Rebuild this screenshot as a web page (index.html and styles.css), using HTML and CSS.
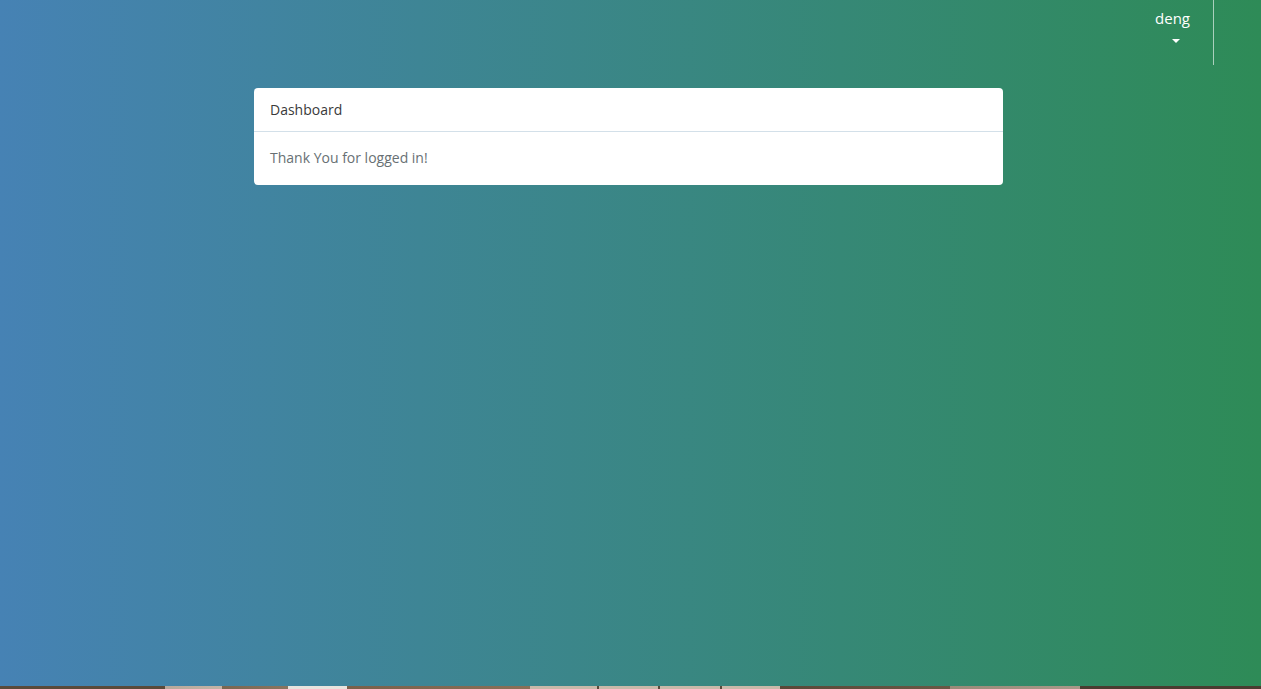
FILE: index.html
```html
<!DOCTYPE html>
<html>
<head>
<meta charset="utf-8">
<link rel="stylesheet" href="styles.css">
<title>Dashboard</title>
</head>
<body>
<div class="page">
  <nav class="navbar">
    <div class="nav-item">
      <span class="user">deng</span>
      <span class="caret"></span>
    </div>
    <div class="divider"></div>
  </nav>
  <main class="content">
    <div class="panel">
      <div class="panel-heading">Dashboard</div>
      <div class="panel-body">Thank You for logged in!</div>
    </div>
  </main>
  <div class="strip"></div>
</div>
</body>
</html>
```
FILE: styles.css
```css
html, body {
  margin: 0;
  padding: 0;
  height: 100%;
}
body {
  font-family: "Open Sans", "Lato", sans-serif;
  font-size: 14px;
  line-height: 1.6;
}
.page {
  height: 689px;
  display: flex;
  flex-direction: column;
  background: linear-gradient(to right, #4682b4, #2e8b57);
  overflow: hidden;
}
.navbar {
  height: 65px;
  display: flex;
  justify-content: flex-end;
  padding-right: 47px;
  flex-shrink: 0;
}
.nav-item {
  display: flex;
  flex-direction: column;
  align-items: center;
  padding: 6px 23px 0 0;
  color: #fff;
}
.user {
  font-size: 15px;
  line-height: 24px;
}
.caret {
  margin-top: 9px;
  width: 0;
  height: 0;
  border-left: 4px solid transparent;
  border-right: 4px solid transparent;
  border-top: 4px solid #fff;
  margin-left: 6px;
}
.divider {
  width: 1px;
  height: 65px;
  background: rgba(255, 255, 255, 0.6);
}
.content {
  flex: 1;
  display: flex;
  justify-content: center;
  align-items: flex-start;
  padding-top: 23px;
}
.panel {
  width: 749px;
  background: #fff;
  border-radius: 4px;
  margin-left: -4px;
}
.panel-heading {
  padding: 11px 15px 10px 16px;
  color: #3a3a3a;
  border-bottom: 1px solid #d3e0e9;
}
.panel-body {
  padding: 15px 15px 15px 16px;
  color: #687074;
}
.strip {
  height: 3px;
  flex-shrink: 0;
  background: linear-gradient(to right,
    #5a4a3a 0, #5a4a3a 165px,
    #b8a89a 165px, #c4b4a6 222px,
    #7a6650 222px, #8a7560 288px,
    #e8e4de 288px, #e8e4de 347px,
    #7a604a 347px, #8a7058 530px,
    #c9b9a9 530px, #c9b9a9 597px,
    #5a4a3a 597px, #5a4a3a 599px,
    #c9b9a9 599px, #c9b9a9 658px,
    #5a4a3a 658px, #5a4a3a 660px,
    #c9b9a9 660px, #c9b9a9 720px,
    #5a4a3a 720px, #5a4a3a 722px,
    #c9b9a9 722px, #c9b9a9 780px,
    #5a4838 780px, #6a5845 950px,
    #9a8a78 950px, #a89888 1080px,
    #4a3c30 1080px, #4a3c30 1261px);
}
```
